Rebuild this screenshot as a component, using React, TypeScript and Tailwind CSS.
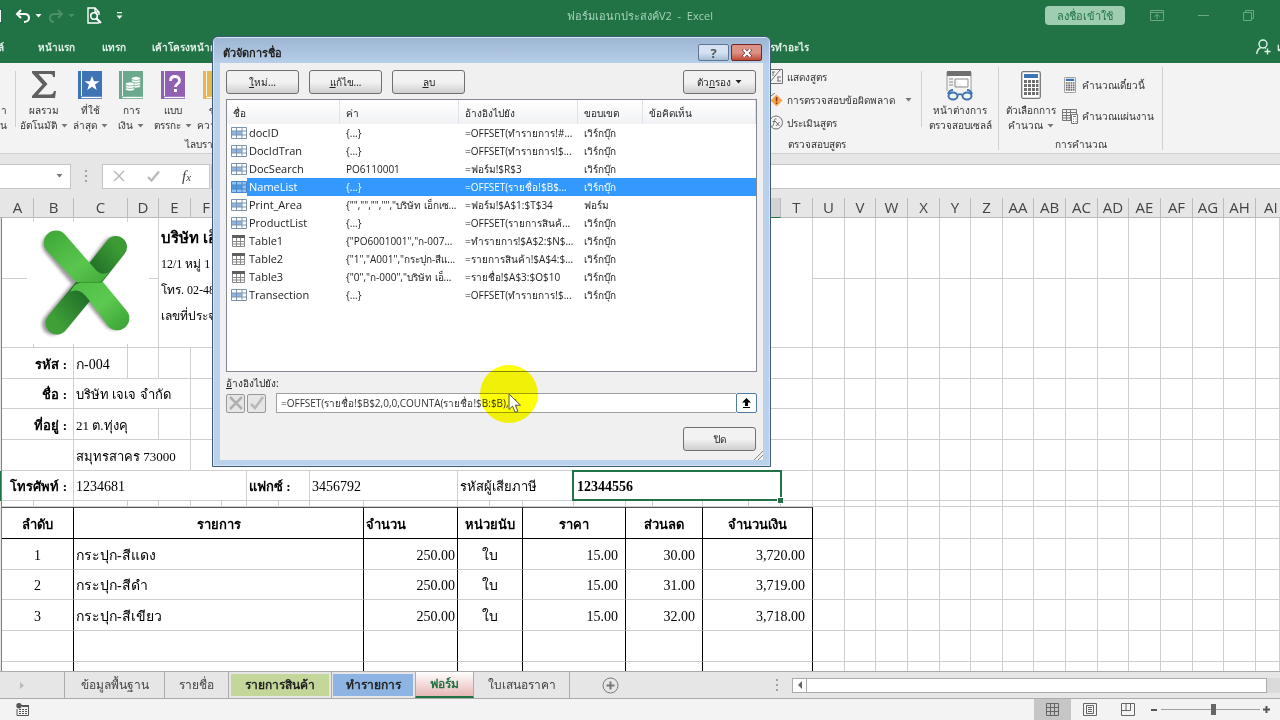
import type { ReactNode } from "react"

const UI = "font-['Open_Sans','Noto_Sans',sans-serif]"
const SERIF = "font-['Liberation_Serif',serif]"

type Cell = {
  span: number
  rows?: number
  text?: ReactNode
  cls?: string
}

const COLUMNS = [
  ["A", 32], ["B", 40], ["C", 54], ["D", 31], ["E", 32], ["F", 31], ["G", 25],
  ["H", 32], ["I", 31], ["J", 54], ["K", 94], ["L", 32], ["M", 33], ["N", 51],
  ["O", 52], ["P", 27], ["Q", 50], ["R", 46], ["S", 32], ["T", 32], ["U", 32],
  ["V", 31], ["W", 32], ["X", 32], ["Y", 31], ["Z", 32], ["AA", 31], ["AB", 32],
  ["AC", 32], ["AD", 31], ["AE", 32], ["AF", 32], ["AG", 31], ["AH", 32],
] as const

const NAMES = [
  { name: "docID", value: "{...}", refers: "=OFFSET(ทำรายการ!#...", scope: "เวิร์กบุ๊ก" },
  { name: "DocIdTran", value: "{...}", refers: "=OFFSET(ทำรายการ!$...", scope: "เวิร์กบุ๊ก" },
  { name: "DocSearch", value: "PO6110001", refers: "=ฟอร์ม!$R$3", scope: "เวิร์กบุ๊ก" },
  { name: "NameList", value: "{...}", refers: "=OFFSET(รายชื่อ!$B$...", scope: "เวิร์กบุ๊ก", selected: true },
  { name: "Print_Area", value: '{"","","","","บริษัท เอ็กเซ...', refers: "=ฟอร์ม!$A$1:$T$34", scope: "ฟอร์ม" },
  { name: "ProductList", value: "{...}", refers: "=OFFSET(รายการสินค้...", scope: "เวิร์กบุ๊ก" },
  { name: "Table1", value: '{"PO6001001","ก-007...', refers: "=ทำรายการ!$A$2:$N$...", scope: "เวิร์กบุ๊ก", table: true },
  { name: "Table2", value: '{"1","A001","กระปุก-สีแ...', refers: "=รายการสินค้า!$A$4:$...", scope: "เวิร์กบุ๊ก", table: true },
  { name: "Table3", value: '{"0","ก-000","บริษัท เอ็...', refers: "=รายชื่อ!$A$3:$O$10", scope: "เวิร์กบุ๊ก", table: true },
  { name: "Transection", value: "{...}", refers: "=OFFSET(ทำรายการ!$...", scope: "เวิร์กบุ๊ก" },
]

const ITEMS = [
  ["1", "กระปุก-สีแดง", "250.00", "ใบ", "15.00", "30.00", "3,720.00"],
  ["2", "กระปุก-สีดำ", "250.00", "ใบ", "15.00", "31.00", "3,719.00"],
  ["3", "กระปุก-สีเขียว", "250.00", "ใบ", "15.00", "32.00", "3,718.00"],
  ["", "", "", "", "", "", ""],
  ["", "", "", "", "", "", ""],
]

function Caret({ className = "" }: { className?: string }) {
  return (
    <svg width="7" height="4" viewBox="0 0 7 4" className={`inline-block shrink-0 ${className}`}>
      <path d="M0.5 0h6L3.5 3.5z" fill="currentColor" />
    </svg>
  )
}

/* ---------- title bar and tabs ---------- */

function TitleBar() {
  return (
    <div className="grid h-[31px] grid-cols-[1fr_auto_1fr] items-center text-[#a7d3b9]">
      <div className="flex items-center text-white">
        <span className="h-3 w-px bg-white" />
        <button aria-label="เลิกทำ" className="ml-3.5 flex items-center gap-1">
          <svg width="16" height="14" viewBox="0 0 16 14" fill="none" stroke="currentColor" strokeWidth="2">
            <path d="M6 1 2 5l4 4M2 5h7.500c3 0 4.500 1.800 4.500 4s-2 4-5 4" />
          </svg>
          <Caret />
        </button>
        <button aria-label="ทำซ้ำ" className="ml-1.5 flex items-center gap-1 text-[#4b8f68]">
          <svg width="16" height="14" viewBox="0 0 16 14" fill="none" stroke="currentColor" strokeWidth="2">
            <path d="M10 1l4 4-4 4M14 5H6.500C3.500 5 2 6.800 2 9s1 4 4 4" />
          </svg>
          <Caret />
        </button>
        <button aria-label="แสดงตัวอย่าง" className="ml-3">
          <svg width="15" height="17" viewBox="0 0 15 17" fill="none" stroke="currentColor">
            <path d="M12 16H1V1h7l4 4v3M8 1v4h4" strokeWidth="1.400" />
            <circle cx="7" cy="9" r="3.300" strokeWidth="1.600" />
            <path d="M9.500 11.500 14 16" strokeWidth="2.200" />
          </svg>
        </button>
        <button aria-label="กำหนดเอง" className="ml-3.5">
          <svg width="7" height="8" viewBox="0 0 7 8" fill="currentColor">
            <path d="M1 0h5v1.300H1zM0.500 3.500h6L3.500 7z" />
          </svg>
        </button>
      </div>
      <div className="text-[11px] leading-4 whitespace-pre">ฟอร์มเอนกประสงค์V2  -  Excel</div>
      <div className="flex items-center justify-end pr-[26px]">
        <button className="h-[19px] w-20 rounded-sm bg-[#9fcdb2] text-[11px] leading-4 text-[#217346]">ลงชื่อเข้าใช้</button>
        <button aria-label="ตัวเลือกการแสดง Ribbon" className="ml-[25px]">
          <svg width="14" height="11" viewBox="0 0 14 11" fill="none" stroke="#6ba885">
            <path d="M.5.5h13v10H.5zM.5 2.500h13M7 9V4.500M4.500 6.500 7 4.300l2.500 2.200" />
          </svg>
        </button>
        <button aria-label="ย่อเล็กสุด" className="ml-[34px]">
          <svg width="11" height="11" viewBox="0 0 11 11" stroke="#6ba885"><path d="M0 5.500h11" /></svg>
        </button>
        <button aria-label="คืนค่าเดิม" className="ml-[34px]">
          <svg width="11" height="11" viewBox="0 0 11 11" fill="none" stroke="#6ba885">
            <path d="M.5 2.500h8v8h-8zM2.500 2.500v-2h8v8h-2" />
          </svg>
        </button>
      </div>
    </div>
  )
}

function TabRow() {
  return (
    <div className="flex h-8 items-center text-[10px] leading-4 font-semibold whitespace-nowrap text-[#e2f1e8]">
      <button className="flex w-1 justify-end overflow-hidden">ไฟล์</button>
      <button className="ml-8 w-10">หน้าแรก</button>
      <button className="ml-6 w-7">แทรก</button>
      <button className="ml-6 text-left">เค้าโครงหน้ากระดาษ</button>
      <span className="flex-1" />
      <button className="mr-[447px] flex w-10 justify-end overflow-hidden">ต้องการทำอะไร</button>
      <button className="flex w-6 shrink-0 items-center gap-1.5 overflow-hidden">
        <svg width="15" height="16" viewBox="0 0 15 16" fill="none" stroke="currentColor" strokeWidth="1.400" className="shrink-0">
          <circle cx="7" cy="5" r="4" />
          <path d="M.7 15c.3-3 2-5.500 4-6.500M9 8.500l1 1M11.500 9.500v6M8.500 12.500h6" />
        </svg>
        แชร์
      </button>
    </div>
  )
}

/* ---------- ribbon ---------- */

function Book({ color, children }: { color: string; children?: ReactNode }) {
  return (
    <svg width="24" height="28" viewBox="0 0 24 28">
      <path d="M0 0h3v28H0z" fill={color} />
      <path d="M4 0h20v25H4z" fill={color} />
      <path d="M3 25.500h21v2H3z" fill="#fff" stroke={color} strokeWidth=".8" />
      {children}
    </svg>
  )
}

function BigButton({ icon, lines, caret, width }: { icon: ReactNode; lines: string[]; caret?: boolean; width: string }) {
  return (
    <button className={`flex shrink-0 flex-col items-center pt-2 text-[10px] leading-[15px] whitespace-nowrap text-[#333] ${width}`}>
      <span className="flex h-8 items-start justify-center">{icon}</span>
      <span>{lines[0]}</span>
      <span className="flex items-center gap-1">
        {lines[1]}
        {caret && <Caret className="text-[#777]" />}
      </span>
    </button>
  )
}

function Calculator({ small }: { small?: boolean }) {
  return (
    <svg width={small ? 12 : 20} height={small ? 16 : 28} viewBox="0 0 20 28" preserveAspectRatio="none" className="shrink-0">
      <rect x=".7" y=".7" width="18.600" height="26.600" rx="1.500" fill="#fff" stroke="#777" strokeWidth="1.300" />
      <path d="M3 3h14v4H3z" fill="#3e74b4" />
      <path
        d="M3 9h3v3H3zM7 9h3v3H7zM11 9h3v3h-3zM15 9h2.500v3H15zM3 13h3v3H3zM7 13h3v3H7zM11 13h3v3h-3zM15 13h2.500v3H15zM3 17h3v3H3zM7 17h3v3H7zM11 17h3v3h-3zM15 17h2.500v3H15zM3 21h3v3H3zM7 21h3v3H7zM11 21h3v3h-3zM15 21h2.500v3H15z"
        fill="#707070"
      />
    </svg>
  )
}

function Ribbon() {
  return (
    <div className="flex h-[91px] shrink-0 overflow-hidden border-b border-[#d0d0d0] bg-[#f3f3f3] text-[10px] leading-4 text-[#333]">
      <div className="flex w-[214px] shrink-0 flex-col overflow-hidden">
        <div className="flex h-[73px]">
          <div className="flex w-[7px] shrink-0 flex-col items-end overflow-hidden pt-10 leading-[15px]">
            <span>า</span>
            <span>ชัน</span>
          </div>
          <span className="mt-2 ml-2 h-14 w-px shrink-0 bg-[#d0d0d0]" />
          <BigButton
            width="w-[56px]"
            caret
            lines={["ผลรวม", "อัตโนมัติ"]}
            icon={
              <svg width="24" height="27" viewBox="0 0 24 27">
                <path d="M0 0h23v6h-2c0-2-1-3-3-3H6.500l9 10L6 23.500h12c2 0 3.500-1 4-3.500h2l-1 7H0v-2l10.500-11.500L0 2z" fill="#606060" />
              </svg>
            }
          />
          <BigButton
            width="w-9"
            caret
            lines={["ที่ใช้", "ล่าสุด"]}
            icon={
              <Book color="#3e74b4">
                <path d="m14 5 2 5.200h5.500l-4.500 3.300 1.700 5.500-4.700-3.300L9.300 19l1.700-5.500-4.500-3.300H12z" fill="#fff" />
              </Book>
            }
          />
          <BigButton
            width="w-[46px]"
            caret
            lines={["การ", "เงิน"]}
            icon={
              <Book color="#6ba88c">
                <g fill="#fff" stroke="#6ba88c" strokeWidth=".7">
                  <ellipse cx="17" cy="15" rx="4.500" ry="2" />
                  <ellipse cx="17" cy="12.500" rx="4.500" ry="2" />
                  <ellipse cx="17" cy="10" rx="4.500" ry="2" />
                  <ellipse cx="17" cy="7.500" rx="4.500" ry="2" />
                  <ellipse cx="11" cy="18" rx="4.500" ry="2" />
                  <ellipse cx="11" cy="15.500" rx="4.500" ry="2" />
                  <ellipse cx="11" cy="13" rx="4.500" ry="2" />
                </g>
              </Book>
            }
          />
          <BigButton
            width="w-[37px]"
            caret
            lines={["แบบ", "ตรรกะ"]}
            icon={
              <Book color="#9160b2">
                <path d="M9.500 10c0-3 2-4.500 4.500-4.500s4.500 1.500 4.500 4c0 3.500-4 3.500-4 6.500" fill="none" stroke="#fff" strokeWidth="2.800" />
                <path d="M13 18h3v3h-3z" fill="#fff" />
              </Book>
            }
          />
          <BigButton
            width="w-[48px]"
            caret
            lines={["ข้อ", "ความ"]}
            icon={<Book color="#e8b64c" />}
          />
        </div>
        <div className="flex justify-start pl-[185px] whitespace-nowrap">ไลบรารี</div>
      </div>
      {/* the groups in between stay empty, the dialog lies over them */}
      <div className="w-[556px] shrink-0" />
      <div className="flex w-[151px] shrink-0 flex-col">
        <div className="flex h-[73px] flex-col justify-start pt-0.5 whitespace-nowrap">
          <button className="flex h-[23px] items-center gap-1">
            <svg width="13" height="15" viewBox="0 0 13 15" fill="none" stroke="#707070" className="shrink-0">
              <path d="M0 .5h12.500v14H0M0 13 10 1M2 3h3M3 3v4M7 8h4M7 12h4M8 8v4" />
            </svg>
            แสดงสูตร
          </button>
          <button className="flex h-[23px] items-center gap-1">
            <svg width="13" height="14" viewBox="0 0 13 14" className="shrink-0">
              <path d="m1 3 4-3" stroke="#707070" />
              <path d="m6.500 1.500 6 6-6 6-6-6z" fill="#f0a84a" />
              <path d="M5.800 4h1.600v4.500H5.800zM5.800 9.500h1.600V11H5.800z" fill="#a03020" />
            </svg>
            การตรวจสอบข้อผิดพลาด
            <Caret className="ml-1.5 text-[#777]" />
          </button>
          <button className="flex h-[23px] items-center gap-1">
            <svg width="13" height="15" viewBox="0 0 13 15" fill="none" stroke="#707070" className="shrink-0">
              <circle cx="6" cy="7.500" r="6.500" />
              <path d="M6.500 4c-2-1-2 1-2.500 3.500S3 12 1.500 11M2.500 6.500H6M6 7l3.500 4M9.500 7 6 11" />
            </svg>
            ประเมินสูตร
          </button>
        </div>
        <div className="pr-[75px] text-right whitespace-nowrap">ตรวจสอบสูตร</div>
      </div>
      <span className="mt-2 h-14 w-px shrink-0 bg-[#d0d0d0]" />
      <BigButton
        width="w-[76px]"
        lines={["หน้าต่างการ", "ตรวจสอบเซลล์"]}
        icon={
          <svg width="28" height="30" viewBox="0 0 28 30" fill="none">
            <path d="M1 1h24v21" stroke="#999" fill="#fff" />
            <path d="M1 1v19" stroke="#999" />
            <path d="M1 0h24v5H1z" fill="#707070" />
            <path d="M9 8h13v8H9zM3 8h4M3 11h4M3 14h4" stroke="#8a8a8a" />
            <path d="M2 23c1-3 2-4 5-4M26 23c-1-3-2-4-5-4M12 24c1-1 3-1 4 0" stroke="#3e74b4" strokeWidth="2" />
            <ellipse cx="7" cy="25" rx="4.500" ry="3.500" stroke="#3e74b4" strokeWidth="2" />
            <ellipse cx="21" cy="25" rx="4.500" ry="3.500" stroke="#3e74b4" strokeWidth="2" />
          </svg>
        }
      />
      <span className="mt-1 h-[83px] w-px shrink-0 bg-[#d0d0d0]" />
      <div className="flex w-[163px] shrink-0 flex-col">
        <div className="flex h-[73px]">
          <BigButton width="w-[63px]" caret lines={["ตัวเลือกการ", "คำนวณ"]} icon={<Calculator />} />
          <div className="flex flex-col gap-[15px] pt-3.5 whitespace-nowrap">
            <button className="flex h-4 items-center gap-1.5 pl-0.5">
              <Calculator small />
              คำนวณเดี๋ยวนี้
            </button>
            <button className="flex h-4 items-center gap-1">
              <svg width="16" height="15" viewBox="0 0 16 15" fill="none" stroke="#777" className="shrink-0">
                <path d="M.5.5h14v11H.5zM.5 3.500h14M.5 6.500h14M.5 9h14M4.500.5v11M8.500.5v11" />
                <path d="M9.500 5.500h6v9h-6z" fill="#fff" />
                <path d="M11 7.500h3M11 10h1M13.500 10h1M11 12.500h1M13.500 12.500h1" />
              </svg>
              คำนวณแผ่นงาน
            </button>
          </div>
        </div>
        <div className="text-center">การคำนวณ</div>
      </div>
      <span className="mt-1 h-[83px] w-px shrink-0 bg-[#d0d0d0]" />
    </div>
  )
}

function FormulaBar() {
  return (
    <div className="flex h-11 shrink-0 items-center bg-[#e6e6e6] pt-0.5 pb-0.5">
      <button aria-label="กล่องชื่อ" className="flex h-[25px] w-[71px] shrink-0 items-center justify-end border border-l-0 border-[#c6c6c6] bg-white pr-[7px] text-[#777]">
        <Caret />
      </button>
      <svg width="3" height="13" className="mx-[14px] shrink-0" fill="#a0a0a0">
        <path d="M0 0h2v2H0zM0 5h2v2H0zM0 10h2v2H0z" />
      </svg>
      <div className="flex h-[25px] w-[108px] shrink-0 items-center gap-[22px] border border-[#c6c6c6] bg-white pl-2.5">
        <svg width="12" height="12" viewBox="0 0 12 12" stroke="#bcbcbc" strokeWidth="1.600" className="shrink-0">
          <path d="m1 1 10 10M11 1 1 11" />
        </svg>
        <svg width="13" height="12" viewBox="0 0 13 12" fill="none" stroke="#bcbcbc" strokeWidth="2.400" className="shrink-0">
          <path d="m1 7 3.500 3.500L12 1.500" />
        </svg>
        <span className="font-['Liberation_Serif',serif] text-[15px] leading-4 text-[#444] italic">
          f<span className="text-[11px]">x</span>
        </span>
      </div>
      <input aria-label="แถบสูตร" className="ml-px h-[25px] min-w-0 flex-1 border border-r-0 border-[#c6c6c6] bg-white" />
    </div>
  )
}

/* ---------- sheet ---------- */

function Logo() {
  return (
    <svg width="122" height="122" viewBox="0 0 122 122" className="absolute top-1 left-[25px] bg-white">
      <defs>
        <linearGradient id="upper" x1="0" y1="0" x2="1" y2="1">
          <stop offset="0" stopColor="#3da637" />
          <stop offset=".6" stopColor="#5ac64e" />
          <stop offset="1" stopColor="#42a83a" />
        </linearGradient>
        <linearGradient id="lower" x1="0" y1="0" x2="1" y2="1">
          <stop offset="0" stopColor="#4fbd45" />
          <stop offset=".5" stopColor="#5cc950" />
          <stop offset="1" stopColor="#38a032" />
        </linearGradient>
        <linearGradient id="back" x1="1" y1="0" x2="0" y2="1">
          <stop offset="0" stopColor="#3b9a34" />
          <stop offset="1" stopColor="#1f6b28" />
        </linearGradient>
        <linearGradient id="backLow" x1="1" y1="0" x2="0" y2="1">
          <stop offset="0" stopColor="#1f6b28" />
          <stop offset="1" stopColor="#3fa037" />
        </linearGradient>
        <filter id="soft" x="-20%" y="-20%" width="140%" height="140%">
          <feGaussianBlur stdDeviation="1.800" />
        </filter>
      </defs>
      <path d="M29 22 62 61 90 96M89 25 62 61 29 101" transform="translate(-3 1)" fill="none" stroke="#222" strokeOpacity=".45" strokeWidth="22" strokeLinecap="round" filter="url(#soft)" />
      <path d="M89 25 66 54" fill="none" stroke="url(#back)" strokeWidth="22" strokeLinecap="round" />
      <path d="M30 101 58 67" fill="none" stroke="url(#backLow)" strokeWidth="23" strokeLinecap="round" />
      <path d="M20 29A12 12 0 0 1 38 12.500L68 47c4 5 9 6 14 3l-6 8q-2 2.500-6 2.500H52q-3 0-5-2.500z" fill="url(#upper)" />
      <path d="M76 60l23.500 28.500A12 12 0 0 1 81 104L62 78c-6-8-11-12-19-8l4-6q3-3.500 9-3.500h14q4 0 6-.5z" fill="url(#lower)" />
      <path d="M50 60.500h24" stroke="#2f8a2c" strokeOpacity=".4" />
    </svg>
  )
}

function SheetRow({ height, cells, active }: { height: string; cells: Cell[]; active?: boolean }) {
  return (
    <tr className={height}>
      <td className={`border-r border-[#808080] p-0 ${active ? "bg-[#217346]" : "bg-[#e6e6e6]"}`} />
      {cells.map((c, i) => (
        <td
          key={i}
          colSpan={c.span}
          rowSpan={c.rows}
          className={`border-r border-b p-0 pt-[3px] whitespace-nowrap ${c.cls?.includes("border-") ? "" : "border-[#cfcfcf]"} ${c.cls ?? ""}`}
        >
          {c.text}
        </td>
      ))}
    </tr>
  )
}

const blanks = (n: number): Cell[] => Array.from({ length: n }, () => ({ span: 1 }))
const rest = blanks(15)

const LABEL = "text-right pr-1.5 text-[13px] font-bold"
const THAI = "pl-0.5 text-[13px]"
const BOX = "border-r-black border-b-[#cfcfcf]"
const HEAD_LEFT = "border-r-black border-b-black border-t border-t-[#555] pl-0.5 text-[13px] font-bold"
const HEAD = "border-r-black border-b-black border-t border-t-[#555] text-center text-[13px] font-bold"

function Sheet() {
  return (
    <div className="relative min-h-0 flex-1 overflow-hidden bg-white">
      <table className={`w-full min-w-[1279px] table-fixed border-separate border-spacing-0 text-[14px] leading-5 text-black ${SERIF}`}>
        <colgroup>
          <col className="w-0.5" />
          {COLUMNS.map(([name, width]) => (
            <col key={name} style={{ width }} />
          ))}
          <col />
        </colgroup>
        <thead className={`text-[15px] leading-[19px] text-[#444] ${UI}`}>
          <tr className="h-5 bg-[#e6e6e6]">
            <th className="border-b border-[#ababab] p-0" />
            {COLUMNS.map(([name], i) => (
              <th
                key={name}
                className={`border-r border-b p-0 text-center font-normal ${
                  i > 13 && i < 19 ? "border-r-[#bbb] border-b-[#217346] bg-[#d2d2d2]" : "border-[#bbb]"
                }`}
              >
                {name}
              </th>
            ))}
            <th className="overflow-hidden border-b border-[#bbb] p-0 pl-2 text-left font-normal">AI</th>
          </tr>
        </thead>
        <tbody>
          <SheetRow
            height="h-[61px]"
            cells={[
              {
                span: 1,
                cls: "relative",
                text: (
                  <div className="absolute top-0 left-0">
                    <Logo />
                  </div>
                ),
              },
              ...blanks(3),
              {
                span: 16,
                rows: 2,
                cls: "align-top pl-0.5",
                text: (
                  <div className="flex flex-col pt-1 text-[12px] leading-[26px]">
                    <b className="text-[15px]">บริษัท เอ็</b>
                    <span>12/1 หมู่ 1</span>
                    <span>โทร. 02-48</span>
                    <span>เลขที่ประจำ</span>
                  </div>
                ),
              },
              ...rest,
            ]}
          />
          <SheetRow height="h-[69px]" cells={[...blanks(4), ...rest]} />
          <SheetRow
            height="h-[31px]"
            cells={[{ span: 2, text: "รหัส :", cls: LABEL }, { span: 1, text: "ก-004", cls: "pl-0.5" }, ...blanks(3), { span: 14 }, ...rest]}
          />
          <SheetRow
            height="h-[30px]"
            cells={[{ span: 2, text: "ชื่อ :", cls: LABEL }, { span: 3, text: "บริษัท เจเจ จำกัด", cls: THAI }, { span: 15 }, ...rest]}
          />
          <SheetRow
            height="h-[31px]"
            cells={[{ span: 2, text: "ที่อยู่ :", cls: LABEL }, { span: 2, text: "21 ต.ทุ่งคุ", cls: THAI }, { span: 1 }, { span: 15 }, ...rest]}
          />
          <SheetRow
            height="h-[31px]"
            cells={[{ span: 2 }, { span: 3, text: "สมุทรสาคร 73000", cls: THAI }, { span: 15 }, ...rest]}
          />
          <SheetRow
            height="h-[30px]"
            active
            cells={[
              { span: 2, text: "โทรศัพท์ :", cls: LABEL },
              { span: 5, text: "1234681", cls: "pl-0.5" },
              { span: 2, text: "แฟกซ์ :", cls: `${THAI} font-bold` },
              { span: 2, text: "3456792", cls: "pl-0.5" },
              { span: 3, text: "รหัสผู้เสียภาษี", cls: THAI },
              {
                span: 5,
                cls: "relative pl-[3px] font-bold",
                text: (
                  <>
                    12344556
                    <span className="absolute -inset-x-0.5 -inset-y-px border-2 border-[#217346]" />
                    <span className="absolute -right-1 -bottom-1 size-[7px] border border-white bg-[#217346]" />
                  </>
                ),
              },
              { span: 1 },
              ...rest,
            ]}
          />
          <SheetRow height="h-1.5" cells={[...blanks(20), ...rest]} />
          <SheetRow
            height="h-8"
            cells={[
              { span: 2, text: "ลำดับ", cls: HEAD },
              { span: 8, text: "รายการ", cls: HEAD },
              { span: 1, text: "จำนวน", cls: HEAD_LEFT },
              { span: 2, text: "หน่วยนับ", cls: HEAD },
              { span: 2, text: "ราคา", cls: HEAD },
              { span: 2, text: "ส่วนลด", cls: HEAD },
              { span: 3, text: "จำนวนเงิน", cls: HEAD },
              ...rest,
            ]}
          />
          {ITEMS.map((r, i) => (
            <SheetRow
              key={i}
              height={i === 1 ? "h-[30px]" : "h-[31px]"}
              cells={[
                { span: 2, text: r[0], cls: `${BOX} text-center` },
                { span: 8, text: r[1], cls: `${BOX} pl-0.5` },
                { span: 1, text: r[2], cls: `${BOX} text-right pr-0.5` },
                { span: 2, text: r[3], cls: `${BOX} text-center` },
                { span: 2, text: r[4], cls: `${BOX} text-right pr-[7px]` },
                { span: 2, text: r[5], cls: `${BOX} text-right pr-[7px]` },
                { span: 3, text: r[6], cls: `${BOX} text-right pr-[7px]` },
                ...rest,
              ]}
            />
          ))}
        </tbody>
      </table>
    </div>
  )
}

/* ---------- bottom bars ---------- */

function SheetTabs() {
  return (
    <div className="flex h-7 shrink-0 border-t border-b border-[#ababab] bg-[#e6e6e6] text-[12px] leading-5 whitespace-nowrap text-[#444]">
      <div className="flex w-[65px] shrink-0 items-center border-r border-[#ababab] pl-5">
        <svg width="5" height="7" viewBox="0 0 5 7"><path d="M0 0v7l4-3.500z" fill="#bbb" /></svg>
      </div>
      <button className="w-[100px] border-r border-[#ababab]">ข้อมูลพื้นฐาน</button>
      <button className="w-16 border-r border-[#ababab]">รายชื่อ</button>
      <button className="my-0.5 ml-0.5 w-[98px] bg-[#c4d79b] font-semibold text-[#222]">รายการสินค้า</button>
      <span className="ml-0.5 w-px bg-[#ababab]" />
      <button className="my-0.5 ml-px w-20 bg-[#8db4e2] font-semibold text-[#222]">ทำรายการ</button>
      <button className="ml-0.5 w-[59px] border-x border-b-2 border-[#ababab] border-b-[#217346] bg-linear-to-b from-white to-[#e6b8b7] font-bold text-[#217346]">
        ฟอร์ม
      </button>
      <button className="w-24 border-r border-[#ababab]">ใบเสนอราคา</button>
      <button aria-label="แผ่นงานใหม่" className="ml-8">
        <svg width="17" height="17" viewBox="0 0 17 17" fill="none" stroke="#777">
          <circle cx="8.500" cy="8.500" r="7.500" />
          <path d="M4.500 8.500h8M8.500 4.500v8" strokeWidth="2" />
        </svg>
      </button>
      <div className="ml-auto flex w-[504px] items-center">
        <svg width="2" height="12" fill="#a0a0a0"><path d="M0 0h2v2H0zM0 5h2v2H0zM0 10h2v2H0z" /></svg>
        <button aria-label="เลื่อนซ้าย" className="ml-3.5 flex h-[15px] w-[15px] items-center justify-center border border-[#ababab] bg-white">
          <svg width="4" height="8" viewBox="0 0 4 8"><path d="M4 0v8L0 4z" fill="#666" /></svg>
        </button>
        <div className="h-[15px] flex-1 border border-l-0 border-[#ababab] bg-white" />
        <span className="h-[15px] w-[13px] bg-[#dadada]" />
      </div>
    </div>
  )
}

function StatusBar() {
  return (
    <div className="flex h-[21px] shrink-0 items-center bg-[#f3f3f3] pl-4">
      <svg width="13" height="13" viewBox="0 0 13 13" fill="none" stroke="#555">
        <path d="M5 2.500h7.500v10H1V6" />
        <path d="M6 2h7v2H6z" fill="#555" stroke="none" />
        <circle cx="3" cy="2.800" r="2.700" fill="#555" stroke="none" />
        <path d="M3 6.500h8M3 8.500h8M3 10.500h8" strokeDasharray="2 1" />
      </svg>
      <div className="ml-auto flex h-full items-center">
        <button aria-label="ปกติ" className="flex h-full w-[37px] items-center justify-center bg-[#c6c6c6]">
          <svg width="13" height="13" viewBox="0 0 13 13" fill="none" stroke="#666">
            <path d="M.5.5h12v12H.5zM.5 4.500h12M.5 8.500h12M4.500.5v12M8.500.5v12" />
          </svg>
        </button>
        <button aria-label="เค้าโครงหน้ากระดาษ" className="flex h-full w-[38px] items-center justify-center">
          <svg width="14" height="13" viewBox="0 0 14 13" fill="none" stroke="#666">
            <path d="M.5.5h13v12H.5zM3.500 2.500h7v8h-7zM5 4.500h4M5 6.500h4M5 8.500h4" />
          </svg>
        </button>
        <button aria-label="ตัวอย่างตัวแบ่งหน้า" className="flex h-full w-[37px] items-center justify-center">
          <svg width="14" height="13" viewBox="0 0 14 13" fill="none" stroke="#666">
            <path d="M.5.5h13v12H.5zM.5 7.500h9v-7M5 .5v7" />
          </svg>
        </button>
        <button aria-label="ย่อ" className="ml-[5px] h-0.5 w-1.5 bg-[#555]" />
        <div className="relative ml-1 h-px w-[99px] bg-[#a0a0a0]">
          <span className="absolute -top-[5px] left-[50px] h-[11px] w-[5px] bg-[#666]" />
        </div>
        <button aria-label="ขยาย" className="mr-2.5 ml-[3px]">
          <svg width="7" height="7" viewBox="0 0 7 7"><path d="M2.500 0h2v2.500H7v2H4.500V7h-2V4.500H0v-2h2.500z" fill="#555" /></svg>
        </button>
      </div>
    </div>
  )
}

/* ---------- name manager ---------- */

function DialogButton({ children, className = "" }: { children: ReactNode; className?: string }) {
  return (
    <button
      className={`flex h-6 w-[73px] items-center justify-center rounded-[3px] border border-[#707070] bg-linear-to-b from-[#f2f2f2] from-50% to-[#cfcfcf] text-[10px] leading-4 ${className}`}
    >
      {children}
    </button>
  )
}

function NameIcon({ table, selected }: { table?: boolean; selected?: boolean }) {
  if (table) {
    return (
      <svg width="16" height="12" viewBox="0 0 16 12" fill="none" className="shrink-0">
        <path d="M1.500.5h12v11h-12zM1.500 6.500h12M1.500 9h12M5.500 3v8.500M9.500 3v8.500" stroke="#8a8a8a" />
        <path d="M1 0h13v3H1z" fill="#606060" />
      </svg>
    )
  }
  return (
    <svg width="16" height="12" viewBox="0 0 16 12" className="shrink-0">
      <path d="M.5.5h15v11H.5z" fill={selected ? "#8fc3f7" : "#fff"} stroke={selected ? "#4a86c4" : "#7d93ad"} />
      <path d="M1 4h10v4H1z" fill={selected ? "#4d9ae8" : "#8cb6e8"} />
      <path d="M.5 4h15M.5 8h15M5.500.5v11M11 .5v11" stroke={selected ? "#4a86c4" : "#7d93ad"} fill="none" />
    </svg>
  )
}

function NameManager() {
  const th = "border-r border-[#e0e3e8] p-0 pl-1.5 pt-0.5 text-left font-normal"
  return (
    <div
      role="dialog"
      aria-label="ตัวจัดการชื่อ"
      className="absolute top-9 left-[212px] w-[559px] rounded-t-md border border-[#3d5a73] bg-[#b9d1ea] px-[7px] pb-1.5 text-[10px] leading-4 text-[#222] shadow-[inset_0_0_0_1px_#d5e5f5]"
    >
      <div className="-mx-1.5 mt-px flex h-[25px] items-center rounded-t-sm bg-linear-to-b from-[#9db6d3] to-[#b7cee8] pt-1 pr-0.5 pl-[9px]">
        <h2 className="flex-1 text-[11px] font-semibold">ตัวจัดการชื่อ</h2>
        <button aria-label="วิธีใช้" className="flex h-[17px] w-[31px] items-center justify-center rounded-xs border border-[#5f7690] bg-linear-to-b from-[#d5e2f1] from-50% to-[#a6bdd8] text-[13px] font-bold text-[#555]">
          ?
        </button>
        <button aria-label="ปิดหน้าต่าง" className="mr-[5px] ml-0.5 flex h-[17px] w-[31px] items-center justify-center rounded-xs border border-[#6b2a25] bg-linear-to-b from-[#dd9288] from-50% to-[#c04a36]">
          <svg width="10" height="8" viewBox="0 0 10 8">
            <path d="m1 0 8 8M9 0 1 8" stroke="#6b3a3a" strokeWidth="3.500" />
            <path d="m1.500.5 7 7M8.500.5l-7 7" stroke="#fff" strokeWidth="2.200" />
          </svg>
        </button>
      </div>
      <div className="relative h-[397px] bg-[#f0f0f0] px-1.5 pt-[7px]">
        <div className="flex gap-2.5 pr-px">
          <DialogButton><u>ใ</u>หม่...</DialogButton>
          <DialogButton><u>แ</u>ก้ไข...</DialogButton>
          <DialogButton><u>ล</u>บ</DialogButton>
          <DialogButton className="ml-auto gap-1">
            <span>ตัว<u>ก</u>รอง</span>
            <Caret />
          </DialogButton>
        </div>
        <div className="mt-[5px] h-[273px] overflow-hidden border border-[#828790] bg-white">
          <table className="w-full table-fixed border-separate border-spacing-0 whitespace-nowrap">
            <colgroup>
              <col className="w-[113px]" />
              <col className="w-[119px]" />
              <col className="w-[119px]" />
              <col className="w-[65px]" />
              <col />
            </colgroup>
            <thead>
              <tr className="h-6 bg-linear-to-b from-white to-[#f1f2f4]">
                <th className={th}>ชื่อ</th>
                <th className={th}>ค่า</th>
                <th className={th}>อ้างอิงไปยัง</th>
                <th className={th}>ขอบเขต</th>
                <th className={th}>ข้อคิดเห็น</th>
              </tr>
            </thead>
            <tbody>
              {NAMES.map((n) => {
                const td = n.selected ? "bg-[#3399ff] p-0 pl-1.5 text-white" : "p-0 pl-1.5"
                return (
                  <tr key={n.name} className="h-[18px]">
                    <td className="p-0">
                      <span className="flex items-center pl-1">
                        <NameIcon table={n.table} selected={n.selected} />
                        <span className={`flex-1 pl-0.5 text-[11px] leading-[18px] ${n.selected ? "bg-[#3399ff] text-white" : ""}`}>
                          {n.name}
                        </span>
                      </span>
                    </td>
                    <td className={td}>{n.value}</td>
                    <td className={td}>{n.refers}</td>
                    <td className={td}>{n.scope}</td>
                    <td className={td} />
                  </tr>
                )
              })}
            </tbody>
          </table>
        </div>
        <label htmlFor="refers" className="mt-[3px] block"><u>อ้</u>างอิงไปยัง:</label>
        <div className="mt-0.5 flex items-center">
          <button aria-label="ยกเลิก" className="flex size-[19px] items-center justify-center rounded-xs border border-[#999] bg-[#e6e6e6]">
            <svg width="14" height="14" viewBox="0 0 14 14" stroke="#b0b0b0" strokeWidth="2.500"><path d="m1 1 12 12M13 1 1 13" /></svg>
          </button>
          <button aria-label="ยืนยัน" className="ml-0.5 flex size-[19px] items-center justify-center rounded-xs border border-[#999] bg-[#e6e6e6]">
            <svg width="14" height="14" viewBox="0 0 14 14" fill="none" stroke="#b8b8b8" strokeWidth="2.500"><path d="m1 8 4 4 8-11" /></svg>
          </button>
          <input
            id="refers"
            className="ml-2.5 h-5 min-w-0 flex-1 border border-r-0 border-[#a0a0a0] bg-white pl-1 text-[10px] leading-4 text-[#333]"
            defaultValue="=OFFSET(รายชื่อ!$B$2,0,0,COUNTA(รายชื่อ!$B:$B),3)"
          />
          <button aria-label="ยุบกล่องโต้ตอบ" className="flex h-5 w-[21px] items-center justify-center rounded-xs border border-[#4f7ba3] bg-white">
            <svg width="9" height="10" viewBox="0 0 9 10" fill="#000"><path d="M4.500 0 9 4.500H6V8H3V4.500H0zM1 9h7v1H1z" /></svg>
          </button>
        </div>
        <div className="mt-3.5 flex justify-end pr-px">
          <DialogButton>ปิด</DialogButton>
        </div>
        <svg width="9" height="9" viewBox="0 0 9 9" stroke="#888" className="absolute right-0 bottom-0">
          <path d="M0 9 9 0M4 9l5-5" />
        </svg>
      </div>
    </div>
  )
}

function Pointer() {
  return (
    <>
      <span className="pointer-events-none absolute top-[365px] left-[480px] size-[58px] rounded-full bg-[#ffff08] mix-blend-multiply" />
      <svg width="14" height="21" viewBox="0 0 14 21" className="pointer-events-none absolute top-[393px] left-[508px]">
        <path d="M1 1v15.500l3.600-3.400 2.600 6.200 2.700-1.100-2.600-6H12.500z" fill="#fff" stroke="#555" />
      </svg>
    </>
  )
}

export default function App() {
  return (
    <div className={`relative flex h-screen flex-col overflow-hidden bg-white ${UI}`}>
      <header className="shrink-0 bg-[#217346]">
        <TitleBar />
        <TabRow />
      </header>
      <Ribbon />
      <FormulaBar />
      <Sheet />
      <SheetTabs />
      <StatusBar />
      <NameManager />
      <Pointer />
    </div>
  )
}
